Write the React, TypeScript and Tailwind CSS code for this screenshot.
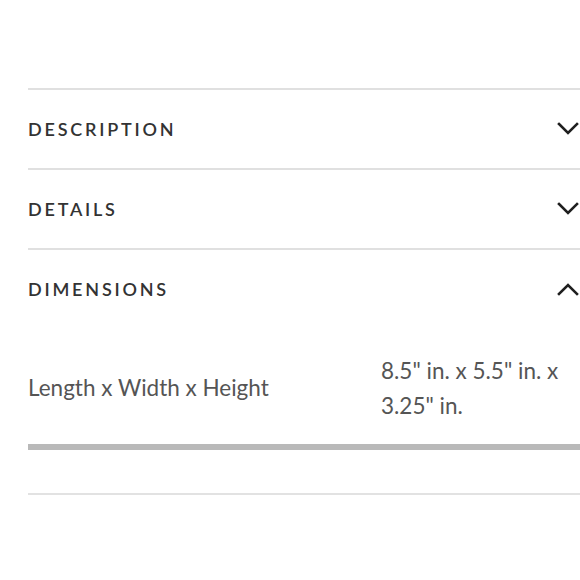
import React from "react";

function Chevron({ up }: { up?: boolean }) {
  return (
    <svg width="22" height="14" viewBox="0 0 22 14" fill="none" className="shrink-0">
      <path
        d={up ? "M2 12L11 3L20 12" : "M2 2L11 11L20 2"}
        stroke="#1f1f1f"
        strokeWidth="2.6"
        strokeLinecap="square"
      />
    </svg>
  );
}

function Row({ title, open }: { title: string; open?: boolean }) {
  return (
    <div className="flex h-[80px] items-center justify-between border-t-2 border-[#e0e0e0] pr-[1px]">
      <span className="text-[18px] font-semibold uppercase tracking-[0.155em] text-[#333333]">
        {title}
      </span>
      <Chevron up={open} />
    </div>
  );
}

export default function App() {
  return (
    <div
      className="h-[580px] w-[580px] overflow-hidden bg-white"
      style={{ fontFamily: "Lato, 'Noto Sans', sans-serif" }}
    >
      <div className="ml-[28px] w-[552px] pt-[88px]">
        <Row title="Description" />
        <Row title="Details" />
        <Row title="Dimensions" open />
        <div className="grid h-[116px] grid-cols-[353px_1fr] items-center pt-[3px] text-[22.5px] text-[#555555]">
          <span>Length x Width x Height</span>
          <span className="leading-[35px]">
            8.5" in. x 5.5" in. x
            <br />
            3.25" in.
          </span>
        </div>
        <div className="h-[6px] bg-[#b9b9b9]" />
        <div className="mt-[43px] h-[2px] bg-[#e2e2e2]" />
      </div>
    </div>
  );
}
